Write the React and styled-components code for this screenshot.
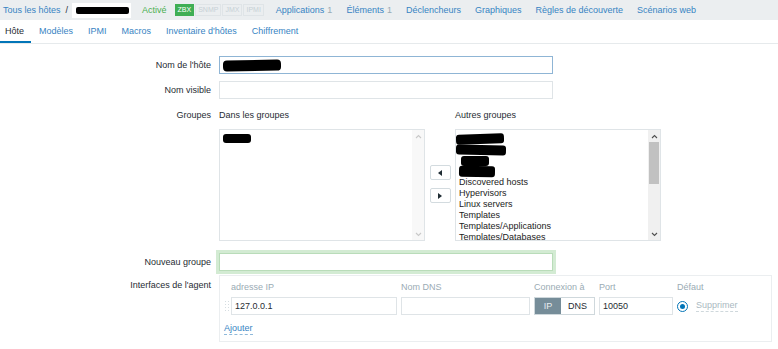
import React from "react";
import styled, { createGlobalStyle, css } from "styled-components";

const GlobalStyle = createGlobalStyle`
  * { box-sizing: border-box; }
  html, body { margin: 0; padding: 0; background: #fff; }
  body {
    font-family: "Liberation Sans", Arial, sans-serif;
    font-size: 9px;
    color: #1f2c33;
    width: 778px;
    height: 349px;
    overflow: hidden;
  }
`;

const blue = "#3784c3";

const TopBar = styled.div`
  display: flex;
  align-items: center;
  height: 20px;
  padding-left: 3px;
  background: #ebeef0;
  white-space: nowrap;
`;

const Crumb = styled.span`
  color: ${blue};
`;

const Slash = styled.span`
  margin: 0 4px 0 5px;
`;

const HostBox = styled.span`
  display: inline-flex;
  align-items: center;
  width: 59px;
  height: 15px;
  padding-left: 4px;
  background: #fff;
`;

const Redacted = styled.span`
  display: block;
  width: ${(p) => p.$w}px;
  height: ${(p) => p.$h}px;
  margin-left: ${(p) => p.$x || 0}px;
  background: #000;
  border-radius: ${(p) => p.$r ?? 3}px;
  transform: rotate(${(p) => p.$rot || 0}deg);
`;

const Status = styled.span`
  margin-left: 11px;
  color: #4caf50;
`;

const Tags = styled.div`
  display: flex;
  gap: 1px;
  margin-left: 8px;
`;

const Tag = styled.span`
  height: 12px;
  padding: 0 2px;
  line-height: 10px;
  font-size: 7px;
  border: 1px solid ${(p) => (p.$on ? "#3fae54" : "#dfe4e7")};
  background: ${(p) => (p.$on ? "#3fae54" : "transparent")};
  color: ${(p) => (p.$on ? "#fff" : "#c7d1d6")};
`;

const Nav = styled.nav`
  display: flex;
  gap: 14px;
  margin-left: 12px;
`;

const NavItem = styled.span`
  color: ${blue};
`;

const Count = styled.span`
  margin-left: 3px;
  color: #9aabb4;
`;

const Tabs = styled.div`
  display: flex;
  height: 24px;
  border-bottom: 1px solid #e6eaec;
`;

const Tab = styled.span`
  display: flex;
  align-items: center;
  padding: 0 7px 0 8px;
  color: ${(p) => (p.$active ? "#1f2c33" : blue)};
  border-bottom: 2px solid ${(p) => (p.$active ? "#0275b8" : "transparent")};
  &:first-child {
    padding-left: 5px;
  }
`;

const Form = styled.div`
  display: flex;
  flex-direction: column;
  padding-top: 12px;
`;

const FormRow = styled.div`
  display: grid;
  grid-template-columns: 211px 1fr;
  column-gap: 8px;
  margin-top: ${(p) => p.$mt || 0}px;
`;

const Label = styled.div`
  text-align: right;
  line-height: ${(p) => p.$lh || 18}px;
  padding-top: ${(p) => p.$pt || 0}px;
`;

const Field = styled.div`
  display: flex;
  align-items: center;
  width: ${(p) => p.$w || 334}px;
  height: 18px;
  padding: 0 3px;
  background: #fff;
  border: 1px solid ${(p) => (p.$focus ? "#8fb5d5" : "#dfe4e7")};
  ${(p) =>
    p.$glow &&
    css`
      border-color: #b9dcb9;
      box-shadow: 0 0 0 3px #d3ebd3;
    `}
`;

const Groups = styled.div`
  display: grid;
  grid-template-columns: 206px 30px 206px;
  grid-template-rows: 14px 112px;
  row-gap: 7px;
`;

const GroupHead = styled.div`
  line-height: 14px;
  grid-column: ${(p) => p.$col};
`;

const ListBox = styled.div`
  display: flex;
  height: 112px;
  border: 1px solid #dfe4e7;
  background: #fff;
  overflow: hidden;
`;

const ListItems = styled.div`
  flex: 1;
  padding: 3px 3px 0;
  line-height: 11px;
  color: #222;
  overflow: hidden;
  white-space: nowrap;
`;

const Blob = styled.div`
  height: 11px;
  display: flex;
  align-items: center;
`;

const ScrollBar = styled.div`
  display: flex;
  flex-direction: column;
  width: 12px;
  background: ${(p) => (p.$live ? "#f0f0f0" : "#f8f8f8")};
`;

const ScrollArrow = styled.div`
  display: flex;
  align-items: center;
  justify-content: center;
  height: 12px;
  color: ${(p) => (p.$live ? "#505050" : "#c9c9c9")};
`;

const ScrollSpace = styled.div`
  flex: 1;
`;

const Thumb = styled.div`
  height: 42px;
  margin: 0 1px;
  background: #c1c1c1;
`;

const MoveButtons = styled.div`
  display: flex;
  flex-direction: column;
  align-items: center;
  justify-content: center;
  gap: 8px;
  padding-bottom: 2px;
`;

const MoveButton = styled.div`
  display: flex;
  align-items: center;
  justify-content: center;
  width: 21px;
  height: 15px;
  border: 1px solid #d3dbdf;
  border-radius: 2px;
  background: #fff;
`;

const InterfaceBox = styled.div`
  display: grid;
  grid-template-columns: 3px 166px 129px 61px 74px auto;
  grid-template-rows: 12px 18px 16px;
  column-gap: 4px;
  row-gap: 4px;
  width: 553px;
  padding: 5px 4px 6px;
  border: 1px solid #ebeef0;
`;

const ColHead = styled.div`
  grid-column: ${(p) => p.$col};
  line-height: 12px;
  color: #9aabb4;
`;

const Handle = styled.div`
  align-self: center;
  width: 5px;
  height: 12px;
  background-image: radial-gradient(circle, #d5dde1 0.8px, transparent 1px);
  background-size: 3px 3px;
`;

const Toggle = styled.div`
  display: flex;
  height: 18px;
  border: 1px solid #cfd8dc;
`;

const ToggleOpt = styled.span`
  display: flex;
  align-items: center;
  justify-content: center;
  width: ${(p) => p.$w}px;
  background: ${(p) => (p.$on ? "#768d99" : "#fff")};
  color: ${(p) => (p.$on ? "#e8eef1" : "#1f2c33")};
`;

const DefaultCell = styled.div`
  display: flex;
  align-items: center;
  gap: 8px;
`;

const Radio = styled.span`
  display: flex;
  align-items: center;
  justify-content: center;
  width: 11px;
  height: 11px;
  border: 1px solid #0275b8;
  border-radius: 50%;
  &::after {
    content: "";
    width: 5px;
    height: 5px;
    border-radius: 50%;
    background: #0275b8;
  }
`;

const DashedLink = styled.span`
  align-self: end;
  justify-self: start;
  color: ${(p) => (p.$muted ? "#aab9c1" : blue)};
  border-bottom: 1px dashed ${(p) => (p.$muted ? "#cfd8dc" : "#8fb9da")};
  line-height: 11px;
  grid-column: ${(p) => p.$col || "auto"};
  ${(p) =>
    p.$muted &&
    css`
      align-self: center;
    `}
`;

const Chevron = ({ up }) => (
  <svg width="7" height="5" viewBox="0 0 7 5">
    <path
      d={up ? "M1 4 L3.5 1.5 L6 4" : "M1 1 L3.5 3.5 L6 1"}
      fill="none"
      stroke="currentColor"
      strokeWidth="1.1"
    />
  </svg>
);

const Triangle = ({ left }) => (
  <svg width="4" height="6" viewBox="0 0 4 6">
    <path d={left ? "M4 0 L0 3 L4 6 Z" : "M0 0 L4 3 L0 6 Z"} fill="#1f2c33" />
  </svg>
);

const otherGroups = [
  "Discovered hosts",
  "Hypervisors",
  "Linux servers",
  "Templates",
  "Templates/Applications",
  "Templates/Databases",
];

const navItems = [
  { name: "Applications", count: 1 },
  { name: "Éléments", count: 1 },
  { name: "Déclencheurs" },
  { name: "Graphiques" },
  { name: "Règles de découverte" },
  { name: "Scénarios web" },
];

const tabs = ["Hôte", "Modèles", "IPMI", "Macros", "Inventaire d'hôtes", "Chiffrement"];

export default function App() {
  return (
    <>
      <GlobalStyle />
      <TopBar>
        <Crumb>Tous les hôtes</Crumb>
        <Slash>/</Slash>
        <HostBox>
          <Redacted $w={53} $h={7} $r={2} />
        </HostBox>
        <Status>Activé</Status>
        <Tags>
          <Tag $on>ZBX</Tag>
          <Tag>SNMP</Tag>
          <Tag>JMX</Tag>
          <Tag>IPMI</Tag>
        </Tags>
        <Nav>
          {navItems.map((n) => (
            <NavItem key={n.name}>
              {n.name}
              {n.count && <Count>{n.count}</Count>}
            </NavItem>
          ))}
        </Nav>
      </TopBar>

      <Tabs>
        {tabs.map((t, i) => (
          <Tab key={t} $active={i === 0}>
            {t}
          </Tab>
        ))}
      </Tabs>

      <Form>
        <FormRow>
          <Label>Nom de l'hôte</Label>
          <Field $focus>
            <Redacted $w={58} $h={11} $r={4} $rot={-1} />
          </Field>
        </FormRow>

        <FormRow $mt={7}>
          <Label>Nom visible</Label>
          <Field />
        </FormRow>

        <FormRow $mt={9}>
          <Label $lh={14}>Groupes</Label>
          <Groups>
            <GroupHead $col={1}>Dans les groupes</GroupHead>
            <GroupHead $col={3}>Autres groupes</GroupHead>
            <ListBox>
              <ListItems>
                <Blob>
                  <Redacted $w={28} $h={9} $r={3} />
                </Blob>
              </ListItems>
              <ScrollBar>
                <ScrollArrow>
                  <Chevron up />
                </ScrollArrow>
                <ScrollSpace />
                <ScrollArrow>
                  <Chevron />
                </ScrollArrow>
              </ScrollBar>
            </ListBox>
            <MoveButtons>
              <MoveButton>
                <Triangle left />
              </MoveButton>
              <MoveButton>
                <Triangle />
              </MoveButton>
            </MoveButtons>
            <ListBox>
              <ListItems>
                <Blob>
                  <Redacted $w={48} $h={10} $x={-3} $rot={-2} />
                </Blob>
                <Blob>
                  <Redacted $w={50} $h={10} $x={-3} $rot={1} />
                </Blob>
                <Blob>
                  <Redacted $w={28} $h={10} $x={2} />
                </Blob>
                <Blob>
                  <Redacted $w={36} $h={11} $rot={1} />
                </Blob>
                {otherGroups.map((g) => (
                  <div key={g}>{g}</div>
                ))}
              </ListItems>
              <ScrollBar $live>
                <ScrollArrow $live>
                  <Chevron up />
                </ScrollArrow>
                <Thumb />
                <ScrollSpace />
                <ScrollArrow $live>
                  <Chevron />
                </ScrollArrow>
              </ScrollBar>
            </ListBox>
          </Groups>
        </FormRow>

        <FormRow $mt={12}>
          <Label>Nouveau groupe</Label>
          <Field $glow />
        </FormRow>

        <FormRow $mt={4}>
          <Label $lh={12} $pt={4}>
            Interfaces de l'agent
          </Label>
          <InterfaceBox>
            <ColHead $col={2}>adresse IP</ColHead>
            <ColHead $col={3}>Nom DNS</ColHead>
            <ColHead $col={4}>Connexion à</ColHead>
            <ColHead $col={5}>Port</ColHead>
            <ColHead $col={6}>Défaut</ColHead>

            <Handle />
            <Field $w={166}>127.0.0.1</Field>
            <Field $w={129} />
            <Toggle>
              <ToggleOpt $on $w={26}>
                IP
              </ToggleOpt>
              <ToggleOpt $w={33}>DNS</ToggleOpt>
            </Toggle>
            <Field $w={74}>10050</Field>
            <DefaultCell>
              <Radio />
              <DashedLink $muted>Supprimer</DashedLink>
            </DefaultCell>

            <DashedLink $col="1 / 4">Ajouter</DashedLink>
          </InterfaceBox>
        </FormRow>
      </Form>
    </>
  );
}
